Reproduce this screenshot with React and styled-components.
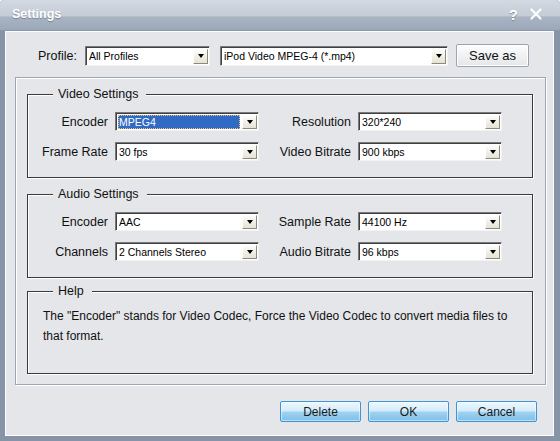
import React from 'react';
import styled, { createGlobalStyle, css } from 'styled-components';

const Global = createGlobalStyle`
  html, body { margin: 0; padding: 0; background: #fff; }
  body { font-family: "Liberation Sans", Arial, sans-serif; }
`;

const Window = styled.div`
  width: 560px;
  height: 441px;
  display: flex;
  flex-direction: column;
  background: #8794a8;
  border-radius: 4px 4px 0 0;
  overflow: hidden;
`;

const TitleBar = styled.div`
  height: 31px;
  flex: none;
  box-sizing: border-box;
  display: flex;
  align-items: center;
  padding: 0 18px 2px 12px;
  background: linear-gradient(#d3d9e1 0%, #c4ccd6 52%, #a9b4c3 57%, #9ba8b9 100%);
  border-bottom: 1px solid #8c98aa;
  color: #fff;
`;

const Title = styled.div`
  flex: 1;
  font-weight: bold;
  font-size: 12.5px;
  text-shadow: 0 1px 1px rgba(60, 70, 90, 0.45);
`;

const TitleIcons = styled.div`
  display: flex;
  align-items: center;
  gap: 12px;
  font-weight: bold;
  font-size: 15px;
  text-shadow: 0 1px 1px rgba(60, 70, 90, 0.45);
`;

const Frame = styled.div`
  flex: 1;
  display: flex;
  padding: 0 6px 5px 5px;
`;

const Body = styled.div`
  flex: 1;
  display: flex;
  flex-direction: column;
  background: #e4e6ea;
  border: 1px solid #fbfcfd;
  padding: 12px 7px 0 9px;
`;

const ProfileRow = styled.div`
  display: flex;
  align-items: center;
  height: 23px;
  padding-left: 23px;
`;

const ProfileLabel = styled.span`
  width: 47px;
  font-size: 12.5px;
  color: #111;
`;

const Select = styled.div`
  display: flex;
  align-items: stretch;
  box-sizing: border-box;
  height: ${p => p.$h || 19}px;
  width: ${p => (p.$w ? `${p.$w}px` : '100%')};
  margin-right: ${p => p.$mr || 0}px;
  background: #fff;
  border: 1px solid;
  border-color: #7a7a7a #f2f2f2 #f2f2f2 #7a7a7a;
  box-shadow: inset 1px 1px 0 #3f3f3f;
  padding: 2px 1px 1px 2px;
`;

const Value = styled.span`
  flex: 1;
  display: flex;
  align-items: center;
  padding-left: 1px;
  margin-right: 2px;
  font-size: 10.5px;
  color: #000;
  white-space: nowrap;
  ${p => p.$selected && css`
    background: #316ac5;
    color: #fff;
    outline: 1px dotted #f1c36a;
    outline-offset: -1px;
  `}
`;

const Arrow = styled.span`
  width: 15px;
  flex: none;
  box-sizing: border-box;
  background: linear-gradient(#fcfcfa, #e6e3d5);
  border: 1px solid;
  border-color: #ffffff #8d8a7d #8d8a7d #ffffff;
  display: flex;
  align-items: center;
  justify-content: center;
  &::after {
    content: '';
    border-left: 3.5px solid transparent;
    border-right: 3.5px solid transparent;
    border-top: 4px solid #000;
  }
`;

const SaveButton = styled.button`
  width: 73px;
  height: 23px;
  box-sizing: border-box;
  border: 1px solid #9ba4b0;
  border-radius: 2px;
  background: linear-gradient(#fdfdfd, #e4e6e9);
  box-shadow: inset 0 0 0 1px #fff;
  font-family: "Liberation Sans", Arial, sans-serif;
  font-size: 13px;
  color: #111;
  padding: 0;
`;

const Panel = styled.div`
  margin-top: 10px;
  border: 1px solid #9ca7b7;
  box-shadow: inset 1px 1px 0 #fff, 1px 1px 0 #fff;
  padding: 16px 12px 10px 11px;
`;

const Group = styled.div`
  position: relative;
  box-sizing: border-box;
  height: ${p => p.$h}px;
  margin-top: ${p => p.$mt || 0}px;
  border: 1px solid #3a3a3a;
  box-shadow: inset 1px 1px 0 #fff, 1px 1px 0 #fff;
`;

const Legend = styled.span`
  position: absolute;
  top: -9px;
  left: 25px;
  line-height: 16px;
  padding: 0 8px 0 5px;
  background: #e4e6ea;
  font-size: 12.5px;
  color: #111;
`;

const Fields = styled.div`
  display: grid;
  grid-template-columns: 80px 144px 85px 144px;
  grid-auto-rows: 19px;
  column-gap: 7px;
  row-gap: 11px;
  padding-top: 17px;
`;

const FieldLabel = styled.span`
  display: flex;
  align-items: center;
  justify-content: flex-end;
  font-size: 12.5px;
  color: #111;
  white-space: nowrap;
`;

const HelpText = styled.p`
  margin: 0;
  padding: 14px 6px 0 15px;
  font-size: 12px;
  line-height: 20px;
  color: #111;
`;

const ButtonRow = styled.div`
  display: flex;
  justify-content: flex-end;
  gap: 7px;
  margin-top: 16px;
  padding-right: 9px;
`;

const Button = styled.button`
  width: 81px;
  height: 21px;
  box-sizing: border-box;
  padding: 0;
  border: 1px solid #3d95d8;
  border-radius: 2px;
  background: linear-gradient(#eef8fe 0%, #d2ebfa 48%, #a2d3f1 52%, #7fbfe7 100%);
  box-shadow: inset 0 0 0 1px rgba(255, 255, 255, 0.5);
  font-family: "Liberation Sans", Arial, sans-serif;
  font-size: 12px;
  color: #1a1a1a;
`;

function Combo({ value, selected, w, h, mr }) {
  return (
    <Select $w={w} $h={h} $mr={mr}>
      <Value $selected={selected}>{value}</Value>
      <Arrow />
    </Select>
  );
}

function Field({ label, value, selected }) {
  return (
    <>
      <FieldLabel>{label}</FieldLabel>
      <Combo value={value} selected={selected} />
    </>
  );
}

export default function App() {
  return (
    <>
      <Global />
      <Window>
        <TitleBar>
          <Title>Settings</Title>
          <TitleIcons>
            <span>?</span>
            <svg width="12" height="12" viewBox="0 0 12 12">
              <path d="M1.5 1.5 L10.5 10.5 M10.5 1.5 L1.5 10.5" stroke="#fff" strokeWidth="2.2" strokeLinecap="round" />
            </svg>
          </TitleIcons>
        </TitleBar>
        <Frame>
          <Body>
            <ProfileRow>
              <ProfileLabel>Profile:</ProfileLabel>
              <Combo value="All Profiles" w={125} h={20} mr={10} />
              <Combo value="iPod Video MPEG-4 (*.mp4)" w={228} h={20} mr={8} />
              <SaveButton>Save as</SaveButton>
            </ProfileRow>

            <Panel>
              <Group $h={84}>
                <Legend>Video Settings</Legend>
                <Fields>
                  <Field label="Encoder" value="MPEG4" selected />
                  <Field label="Resolution" value="320*240" />
                  <Field label="Frame Rate" value="30 fps" />
                  <Field label="Video Bitrate" value="900 kbps" />
                </Fields>
              </Group>

              <Group $h={84} $mt={16}>
                <Legend>Audio Settings</Legend>
                <Fields>
                  <Field label="Encoder" value="AAC" />
                  <Field label="Sample Rate" value="44100 Hz" />
                  <Field label="Channels" value="2 Channels Stereo" />
                  <Field label="Audio Bitrate" value="96 kbps" />
                </Fields>
              </Group>

              <Group $h={83} $mt={13}>
                <Legend>Help</Legend>
                <HelpText>
                  The "Encoder" stands for Video Codec, Force the Video Codec to convert media files to that format.
                </HelpText>
              </Group>
            </Panel>

            <ButtonRow>
              <Button>Delete</Button>
              <Button>OK</Button>
              <Button>Cancel</Button>
            </ButtonRow>
          </Body>
        </Frame>
      </Window>
    </>
  );
}
